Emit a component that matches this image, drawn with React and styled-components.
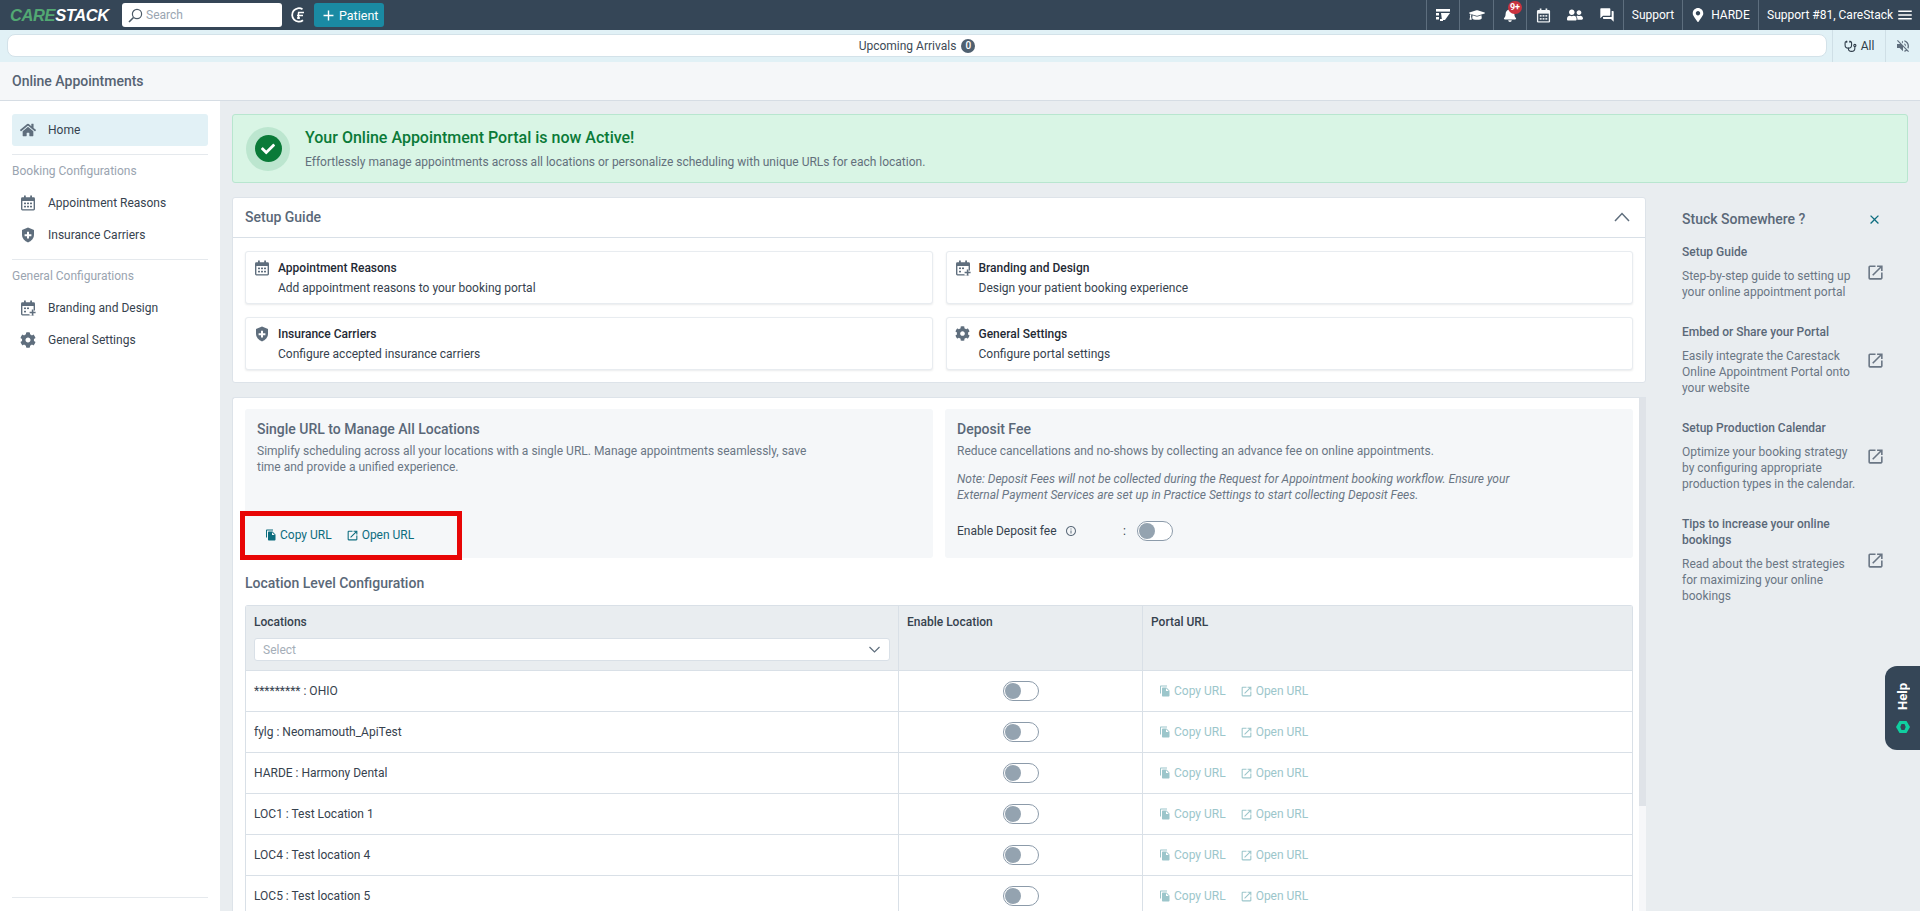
import React from 'react';
import styled, { createGlobalStyle } from 'styled-components';
import {
  FaHome, FaCog, FaBell, FaGraduationCap, FaUserFriends, FaMapMarkerAlt, FaCheck,
} from 'react-icons/fa';
import { MdOpenInNew, MdFileCopy, MdForum, MdVolumeOff, MdClose, MdAdd, MdMenu, MdInfoOutline } from 'react-icons/md';
import { Stethoscope } from 'lucide-react';

const Global = createGlobalStyle`
  html, body { margin: 0; padding: 0; height: 100%; overflow: hidden; }
  body { font-family: Roboto, "Liberation Sans", sans-serif; font-size: 12px; color: #333f4a; }
  * { box-sizing: border-box; }
`;

const Page = styled.div`
  position: relative;
  width: 1920px;
  height: 911px;
  overflow: hidden;
  display: flex;
  flex-direction: column;
  background: #e9edf0;
`;

/* top bar */
const TopBar = styled.header`
  height: 30px;
  flex: none;
  display: flex;
  align-items: stretch;
  background: #354657;
  color: #fff;
`;
const TopLeft = styled.div`
  display: flex;
  align-items: center;
  padding-left: 10px;
  flex: 1;
`;
const Logo = styled.div`
  width: 112px;
  font: italic 700 16.5px "Liberation Sans", sans-serif;
  letter-spacing: -0.4px;
  color: #fff;
  white-space: nowrap;
  span { color: #52a873; }
`;
const SearchBox = styled.div`
  width: 160px;
  height: 24px;
  background: #fff;
  border-radius: 3px;
  display: flex;
  align-items: center;
  gap: 3px;
  padding-left: 6px;
  font-size: 12px;
  color: #9aa5b1;
  svg { flex: none; }
`;
const SpiralSlot = styled.div`
  width: 32px;
  display: flex;
  justify-content: center;
`;
const PatientButton = styled.div`
  width: 70px;
  height: 24px;
  border-radius: 3px;
  background: #1a8aa3;
  display: flex;
  align-items: center;
  padding-left: 6px;
  gap: 2px;
  font-size: 12.5px;
  color: #fff;
`;
const TopCell = styled.div`
  position: relative;
  width: ${(p) => p.$w}px;
  flex: none;
  display: flex;
  align-items: center;
  justify-content: center;
  gap: ${(p) => p.$gap || 0}px;
  border-left: 1px solid #5d6e7e;
  font-size: 12px;
  color: #fff;
  white-space: nowrap;
`;
const UserCell = styled(TopCell)`
  justify-content: flex-start;
  padding-left: 8px;
`;
const Badge = styled.span`
  position: absolute;
  left: 14px;
  top: 1px;
  width: 14px;
  height: 13px;
  border-radius: 7px;
  background: #c9333f;
  color: #fff;
  font-size: 9px;
  font-weight: 700;
  line-height: 13px;
  text-align: center;
`;

/* arrivals bar */
const SubBar = styled.div`
  height: 32px;
  flex: none;
  display: flex;
  align-items: stretch;
  background: #e1f1f6;
`;
const ArrivalsPill = styled.div`
  flex: 1;
  margin: 4px 5px 5px 7px;
  background: #fff;
  border: 1px solid #d3e2e9;
  border-radius: 8px;
  display: flex;
  align-items: center;
  justify-content: center;
  gap: 5px;
  font-size: 12px;
  color: #3d4a56;
`;
const CountDot = styled.span`
  width: 14px;
  height: 14px;
  border-radius: 50%;
  background: #4f6070;
  color: #fff;
  font-size: 10px;
  font-weight: 500;
  line-height: 14px;
  text-align: center;
`;
const SubCell = styled.div`
  width: ${(p) => p.$w}px;
  flex: none;
  display: flex;
  align-items: center;
  justify-content: center;
  gap: 4px;
  border-left: 1px solid #cfdfe6;
  font-size: 12px;
  color: #2f3d4a;
`;

const TitleBar = styled.div`
  height: 39px;
  flex: none;
  display: flex;
  align-items: center;
  padding-left: 12px;
  background: #f5f7f9;
  border-bottom: 1px solid #d6dde4;
  font-size: 14px;
  font-weight: 500;
  color: #566373;
`;

const Body = styled.div`
  flex: 1;
  min-height: 0;
  display: flex;
`;

/* sidebar */
const Sidebar = styled.nav`
  width: 220px;
  flex: none;
  background: #fff;
  padding: 13px 12px 13px;
  display: flex;
  flex-direction: column;
`;
const NavItem = styled.div`
  height: 32px;
  display: flex;
  align-items: center;
  gap: 12px;
  padding-left: 8px;
  border-radius: 3px;
  font-size: 12px;
  color: #36424e;
  background: ${(p) => (p.$active ? '#e2f1f6' : 'transparent')};
`;
const NavDivider = styled.div`
  height: 1px;
  flex: none;
  background: #e5e9ed;
  margin: ${(p) => p.$margin};
`;
const NavLabel = styled.div`
  height: 16px;
  line-height: 16px;
  margin-bottom: 8px;
  font-size: 12px;
  color: #9aa4b0;
`;
const NavSpacer = styled.div`
  flex: 1;
`;

/* main */
const Main = styled.main`
  flex: 1;
  min-width: 0;
  padding: 13px 12px 0;
  display: flex;
  flex-direction: column;
  gap: 14px;
`;
const Banner = styled.section`
  height: 69px;
  flex: none;
  display: flex;
  align-items: center;
  gap: 15px;
  padding-left: 13px;
  background: #d9f5e5;
  border: 1px solid #b8e6cf;
  border-radius: 3px;
`;
const BannerHalo = styled.div`
  width: 44px;
  height: 44px;
  border-radius: 50%;
  background: #bce6cf;
  display: flex;
  align-items: center;
  justify-content: center;
`;
const BannerDisc = styled.div`
  width: 27px;
  height: 27px;
  border-radius: 50%;
  background: #0a7a38;
  color: #fff;
  display: flex;
  align-items: center;
  justify-content: center;
`;
const BannerTitle = styled.div`
  font-size: 16px;
  line-height: 20px;
  font-weight: 500;
  color: #0a7a38;
  margin-bottom: 6px;
`;
const BannerText = styled.div`
  font-size: 12px;
  line-height: 16px;
  color: #63707c;
`;

const Columns = styled.div`
  flex: 1;
  min-height: 0;
  display: flex;
`;
const LeftColumn = styled.div`
  width: 1414px;
  flex: none;
  display: flex;
  flex-direction: column;
  gap: 14px;
`;

/* setup guide */
const Card = styled.section`
  background: #fff;
  border: 1px solid #dde3e9;
  border-radius: 3px;
  flex: none;
`;
const CardHeader = styled.div`
  height: 40px;
  display: flex;
  align-items: center;
  justify-content: space-between;
  padding: 0 15px 2px 12px;
  border-bottom: 1px solid #d9e0e7;
  font-size: 14px;
  font-weight: 500;
  color: #5a6878;
`;
const GuideGrid = styled.div`
  display: grid;
  grid-template-columns: 1fr 1fr;
  gap: 13px;
  padding: 13px 12px 12px;
`;
const GuideItem = styled.div`
  height: 53px;
  display: grid;
  grid-template-columns: 16px 1fr;
  column-gap: 8px;
  grid-template-rows: 20px 20px;
  align-content: center;
  padding-left: 8px;
  background: #fff;
  border: 1px solid #e8ecf0;
  border-radius: 3px;
  box-shadow: 0 1px 2px rgba(50, 60, 70, 0.1);
`;
const GuideIcon = styled.div`
  display: flex;
  align-items: center;
`;
const GuideTitle = styled.div`
  font-size: 12px;
  line-height: 20px;
  font-weight: 500;
  color: #1f2a35;
`;
const GuideText = styled.div`
  grid-column: 2;
  font-size: 12px;
  line-height: 20px;
  color: #36424e;
`;

/* configuration card */
const ConfigCard = styled.section`
  flex: 1;
  min-height: 0;
  display: flex;
  background: #fff;
  border: 1px solid #dde3e9;
  border-width: 1px 0 0 1px;
  border-radius: 3px 0 0 0;
`;
const ConfigBody = styled.div`
  flex: 1;
  min-width: 0;
  padding: 11px 6px 0 12px;
`;
const Track = styled.div`
  width: 7px;
  flex: none;
  background: #f6f7f9;
`;
const Thumb = styled.div`
  height: 408px;
  background: #dfe3e8;
`;
const PanelRow = styled.div`
  display: grid;
  grid-template-columns: 688px 688px;
  gap: 12px;
`;
const Panel = styled.div`
  position: relative;
  height: 149px;
  display: flex;
  flex-direction: column;
  padding: 10px 12px 16px;
  background: #f5f7f9;
  border-radius: 3px;
`;
const PanelTitle = styled.div`
  font-size: 14px;
  line-height: 20px;
  font-weight: 500;
  color: #5a6878;
  margin-bottom: 4px;
`;
const PanelText = styled.div`
  max-width: 570px;
  font-size: 12px;
  line-height: 16px;
  color: #6a7684;
`;
const PanelNote = styled(PanelText)`
  font-style: italic;
  margin-top: 12px;
`;
const LinkRow = styled.div`
  margin-top: ${(p) => (p.$pinned ? 'auto' : '0')};
  display: flex;
  align-items: center;
  gap: 14px;
  padding-left: 8px;
`;
const UrlLink = styled.span`
  display: inline-flex;
  align-items: center;
  gap: 3px;
  font-size: 12px;
  color: ${(p) => (p.$off ? '#9cc6cb' : '#0d6d7f')};
`;
const Highlight = styled.div`
  position: absolute;
  left: -5px;
  top: 102px;
  width: 222px;
  height: 49px;
  border: 5px solid #e80606;
`;
const DepositRow = styled.div`
  margin-top: 18px;
  display: grid;
  grid-template-columns: 166px 14px auto;
  align-items: center;
  height: 20px;
  font-size: 12px;
  color: #36424e;
`;
const DepositLabel = styled.div`
  display: flex;
  align-items: center;
  gap: 8px;
  svg { color: #5f6e7d; }
`;
const Toggle = styled.div`
  width: 36px;
  height: 20px;
  border: 1px solid #8c9baa;
  border-radius: 10px;
  background: #fff;
  padding: 1px;
  &::before {
    content: '';
    display: block;
    width: 16px;
    height: 16px;
    border-radius: 50%;
    background: #94a3b0;
  }
`;
const SectionTitle = styled.div`
  margin-top: 15px;
  height: 20px;
  line-height: 20px;
  font-size: 14px;
  font-weight: 500;
  color: #5a6878;
  margin-bottom: 12px;
`;

/* table */
const Table = styled.div`
  border: 1px solid #d9e0e7;
  border-bottom: 0;
  border-radius: 3px 3px 0 0;
`;
const HeadRow = styled.div`
  height: 65px;
  display: grid;
  grid-template-columns: 652px 244px 1fr;
  background: #e9edf0;
  border-bottom: 1px solid #d9e0e7;
`;
const HeadCell = styled.div`
  padding: 8px 8px 0;
  border-left: ${(p) => (p.$first ? '0' : '1px solid #d9e0e7')};
  font-size: 12px;
  line-height: 16px;
  font-weight: 500;
  color: #36424e;
`;
const SelectBox = styled.div`
  height: 23px;
  margin-top: 8px;
  display: flex;
  align-items: center;
  justify-content: space-between;
  padding: 0 9px 0 8px;
  background: #fff;
  border: 1px solid #d9e0e7;
  border-radius: 3px;
  font-weight: 400;
  color: #a5aeb8;
`;
const Row = styled.div`
  height: 41px;
  display: grid;
  grid-template-columns: 652px 244px 1fr;
  border-bottom: 1px solid #d9e0e7;
`;
const Cell = styled.div`
  display: flex;
  align-items: center;
  justify-content: ${(p) => (p.$center ? 'center' : 'flex-start')};
  padding-left: ${(p) => (p.$center ? 0 : 8)}px;
  border-left: ${(p) => (p.$first ? '0' : '1px solid #d9e0e7')};
  font-size: 12px;
  color: #36424e;
`;

/* help panel */
const HelpPanel = styled.aside`
  flex: 1;
  padding: 12px 0 0 36px;
  color: #6a7684;
`;
const HelpHead = styled.div`
  width: 200px;
  height: 20px;
  display: flex;
  align-items: center;
  justify-content: space-between;
  font-size: 14px;
  font-weight: 500;
  color: #5a6878;
  margin-bottom: 15px;
`;
const HelpItem = styled.div`
  width: 203px;
  display: flex;
  align-items: center;
  justify-content: space-between;
  margin-bottom: 24px;
`;
const HelpBody = styled.div`
  width: 180px;
`;
const HelpTitle = styled.div`
  font-size: 12px;
  line-height: 16px;
  font-weight: 500;
  color: #5a6878;
  margin-bottom: 8px;
`;
const HelpText = styled.div`
  font-size: 12px;
  line-height: 16px;
  color: #6a7684;
`;
const HelpTab = styled.div`
  position: absolute;
  right: 0;
  top: 666px;
  width: 35px;
  height: 84px;
  border-radius: 12px 0 0 12px;
  background: #354657;
  display: flex;
  flex-direction: column;
  align-items: center;
  padding-top: 17px;
  gap: 11px;
  color: #fff;
`;
const HelpWord = styled.div`
  writing-mode: vertical-rl;
  transform: rotate(180deg);
  font-size: 13px;
  font-weight: 700;
  line-height: 16px;
`;

/* drawings */
const CalendarIcon = ({ size = 16, color = '#5f6e7d', inner = '#fff', plus }) => (
  <svg width={size} height={size} viewBox="0 0 16 16">
    <rect x="1" y="2.2" width="14" height="13.3" rx="1.4" fill={color} />
    <rect x="4" y="0.5" width="1.8" height="3" fill={color} />
    <rect x="10.2" y="0.5" width="1.8" height="3" fill={color} />
    <rect x="2.4" y="6" width="11.2" height="8.2" fill={inner} />
    {plus ? (
      <>
        <rect x="4" y="7.5" width="2" height="1.6" fill={color} />
        <rect x="4" y="10.8" width="2" height="1.6" fill={color} />
        <rect x="7" y="7.5" width="2" height="1.6" fill={color} />
        <path d="M9.5 10.5h6v5h-6z" fill={inner} />
        <path d="M11.8 9.5h1.6v2.2h2.2v1.6h-2.2v2.2h-1.6v-2.2H9.6v-1.6h2.2z" fill={color} />
      </>
    ) : (
      [4, 7, 10].flatMap((x) => [7.6, 10.8].map((y) => (
        <rect key={`${x}-${y}`} x={x} y={y} width="2" height="1.6" fill={color} />
      )))
    )}
  </svg>
);
const ShieldIcon = ({ size = 16, color = '#5f6e7d' }) => (
  <svg width={size} height={size} viewBox="0 0 16 16">
    <path d="M8 .6l6 2.3v4.6c0 3.9-2.6 6.6-6 7.9-3.4-1.3-6-4-6-7.9V2.9z" fill={color} />
    <path d="M7 4.8h2v2.4h2.4v2H9v2.4H7V9.200H4.600v-2H7z" fill="#fff" />
  </svg>
);
const SpiralIcon = () => (
  <svg width="16" height="18" viewBox="0 0 16 18" fill="none" stroke="#fff">
    <path d="M12.500 3.300A6.700 6.700 0 1 0 13 14.200" strokeWidth="1.800" />
    <path d="M7 9.500h6M8 6.500h6M7 12h3M8.500 6.500V13" strokeWidth="1.500" />
  </svg>
);
const SearchGlass = () => (
  <svg width="15" height="15" viewBox="0 0 15 15" fill="none" stroke="#4c5a67" strokeWidth="1.200">
    <circle cx="9" cy="6" r="4.600" />
    <path d="M5.500 9.500L1 14" strokeWidth="1.600" />
  </svg>
);
const TaskListIcon = () => (
  <svg width="15" height="14" viewBox="0 0 15 14" fill="#fff">
    <rect x="0" y="1" width="14" height="2.600" />
    <rect x="0" y="5" width="3" height="2.500" />
    <rect x="0" y="9" width="3" height="2.500" />
    <rect x="4" y="11" width="3" height="2" />
    <path d="M5 5h9l-5 7H6z" />
  </svg>
);
const Caret = () => (
  <svg width="11" height="7" viewBox="0 0 11 7" fill="none" stroke="#5f6e7d" strokeWidth="1.200">
    <path d="M.5 1l5 5 5-5" />
  </svg>
);

const rows = [
  '********* : OHIO',
  'fylg : Neomamouth_ApiTest',
  'HARDE : Harmony Dental',
  'LOC1 : Test Location 1',
  'LOC4 : Test location 4',
  'LOC5 : Test location 5',
];

const help = [
  { t: 'Setup Guide', d: 'Step-by-step guide to setting up your online appointment portal' },
  { t: 'Embed or Share your Portal', d: 'Easily integrate the Carestack Online Appointment Portal onto your website' },
  { t: 'Setup Production Calendar', d: 'Optimize your booking strategy by configuring appropriate production types in the calendar.' },
  { t: 'Tips to increase your online bookings', d: 'Read about the best strategies for maximizing your online bookings' },
];

const guide = [
  { icon: <CalendarIcon />, t: 'Appointment Reasons', d: 'Add appointment reasons to your booking portal' },
  { icon: <CalendarIcon plus />, t: 'Branding and Design', d: 'Design your patient booking experience' },
  { icon: <ShieldIcon />, t: 'Insurance Carriers', d: 'Configure accepted insurance carriers' },
  { icon: <FaCog size={15} color="#5f6e7d" />, t: 'General Settings', d: 'Configure portal settings' },
];

const Links = ({ off, pinned }) => (
  <LinkRow $pinned={pinned}>
    <UrlLink $off={off}><MdFileCopy size={12} />Copy URL</UrlLink>
    <UrlLink $off={off}><MdOpenInNew size={13} />Open URL</UrlLink>
  </LinkRow>
);

export default function App() {
  return (
    <Page>
      <Global />
      <TopBar>
        <TopLeft>
          <Logo><span>CARE</span>STACK</Logo>
          <SearchBox><SearchGlass />Search</SearchBox>
          <SpiralSlot><SpiralIcon /></SpiralSlot>
          <PatientButton><MdAdd size={17} />Patient</PatientButton>
        </TopLeft>
        <TopCell $w={33}><TaskListIcon /></TopCell>
        <TopCell $w={34}><FaGraduationCap size={16} /></TopCell>
        <TopCell $w={33}><FaBell size={14} /><Badge>9+</Badge></TopCell>
        <TopCell $w={97} $gap={16}>
          <CalendarIcon size={15} color="#f2f5f7" inner="#354657" />
          <FaUserFriends size={16} />
          <MdForum size={16} />
        </TopCell>
        <TopCell $w={59}>Support</TopCell>
        <TopCell $w={76} $gap={6}><FaMapMarkerAlt size={14} />HARDE</TopCell>
        <UserCell $w={162} $gap={3}>Support #81, CareStack<MdMenu size={18} /></UserCell>
      </TopBar>

      <SubBar>
        <ArrivalsPill>Upcoming Arrivals<CountDot>0</CountDot></ArrivalsPill>
        <SubCell $w={53}><Stethoscope size={13} strokeWidth={2} />All</SubCell>
        <SubCell $w={35}><MdVolumeOff size={16} color="#5f6e7d" /></SubCell>
      </SubBar>

      <TitleBar>Online Appointments</TitleBar>

      <Body>
        <Sidebar>
          <NavItem $active><FaHome size={16} color="#5f6e7d" />Home</NavItem>
          <NavDivider $margin="8px 0" />
          <NavLabel>Booking Configurations</NavLabel>
          <NavItem><CalendarIcon />Appointment Reasons</NavItem>
          <NavItem><ShieldIcon />Insurance Carriers</NavItem>
          <NavDivider $margin="8px 0" />
          <NavLabel>General Configurations</NavLabel>
          <NavItem><CalendarIcon plus />Branding and Design</NavItem>
          <NavItem><FaCog size={16} color="#5f6e7d" />General Settings</NavItem>
          <NavSpacer />
          <NavDivider $margin="0" />
        </Sidebar>

        <Main>
          <Banner>
            <BannerHalo><BannerDisc><FaCheck size={14} /></BannerDisc></BannerHalo>
            <div>
              <BannerTitle>Your Online Appointment Portal is now Active!</BannerTitle>
              <BannerText>Effortlessly manage appointments across all locations or personalize scheduling with unique URLs for each location.</BannerText>
            </div>
          </Banner>

          <Columns>
            <LeftColumn>
              <Card>
                <CardHeader>
                  Setup Guide
                  <svg width="16" height="10" viewBox="0 0 16 10" fill="none" stroke="#5f6e7d" strokeWidth="1.500"><path d="M1 9l7-7.500L15 9" /></svg>
                </CardHeader>
                <GuideGrid>
                  {guide.map((g) => (
                    <GuideItem key={g.t}>
                      <GuideIcon>{g.icon}</GuideIcon>
                      <GuideTitle>{g.t}</GuideTitle>
                      <GuideText>{g.d}</GuideText>
                    </GuideItem>
                  ))}
                </GuideGrid>
              </Card>

              <ConfigCard>
                <ConfigBody>
                  <PanelRow>
                    <Panel>
                      <PanelTitle>Single URL to Manage All Locations</PanelTitle>
                      <PanelText>Simplify scheduling across all your locations with a single URL. Manage appointments seamlessly, save time and provide a unified experience.</PanelText>
                      <Links pinned />
                      <Highlight />
                    </Panel>
                    <Panel>
                      <PanelTitle>Deposit Fee</PanelTitle>
                      <PanelText>Reduce cancellations and no-shows by collecting an advance fee on online appointments.</PanelText>
                      <PanelNote>Note: Deposit Fees will not be collected during the Request for Appointment booking workflow. Ensure your External Payment Services are set up in Practice Settings to start collecting Deposit Fees.</PanelNote>
                      <DepositRow>
                        <DepositLabel>Enable Deposit fee <MdInfoOutline size={12} /></DepositLabel>
                        <span>:</span>
                        <Toggle />
                      </DepositRow>
                    </Panel>
                  </PanelRow>

                  <SectionTitle>Location Level Configuration</SectionTitle>

                  <Table>
                    <HeadRow>
                      <HeadCell $first>
                        Locations
                        <SelectBox>Select<Caret /></SelectBox>
                      </HeadCell>
                      <HeadCell>Enable Location</HeadCell>
                      <HeadCell>Portal URL</HeadCell>
                    </HeadRow>
                    {rows.map((r) => (
                      <Row key={r}>
                        <Cell $first>{r}</Cell>
                        <Cell $center><Toggle /></Cell>
                        <Cell><Links off /></Cell>
                      </Row>
                    ))}
                  </Table>
                </ConfigBody>
                <Track><Thumb /></Track>
              </ConfigCard>
            </LeftColumn>

            <HelpPanel>
              <HelpHead>Stuck Somewhere ?<MdClose size={15} color="#0d6d7f" /></HelpHead>
              {help.map((h) => (
                <HelpItem key={h.t}>
                  <HelpBody>
                    <HelpTitle>{h.t}</HelpTitle>
                    <HelpText>{h.d}</HelpText>
                  </HelpBody>
                  <MdOpenInNew size={19} color="#6a7684" />
                </HelpItem>
              ))}
            </HelpPanel>
          </Columns>
        </Main>
      </Body>

      <HelpTab>
        <HelpWord>Help</HelpWord>
        <svg width="14" height="12" viewBox="0 0 14 12"><path d="M3.500 0h7L14 6l-3.500 6h-7L0 6z" fill="#10cfa0" /><path d="M5.500 3h3l1.200 3-1.200 3h-3L4.300 6z" fill="#354657" /></svg>
      </HelpTab>
    </Page>
  );
}
